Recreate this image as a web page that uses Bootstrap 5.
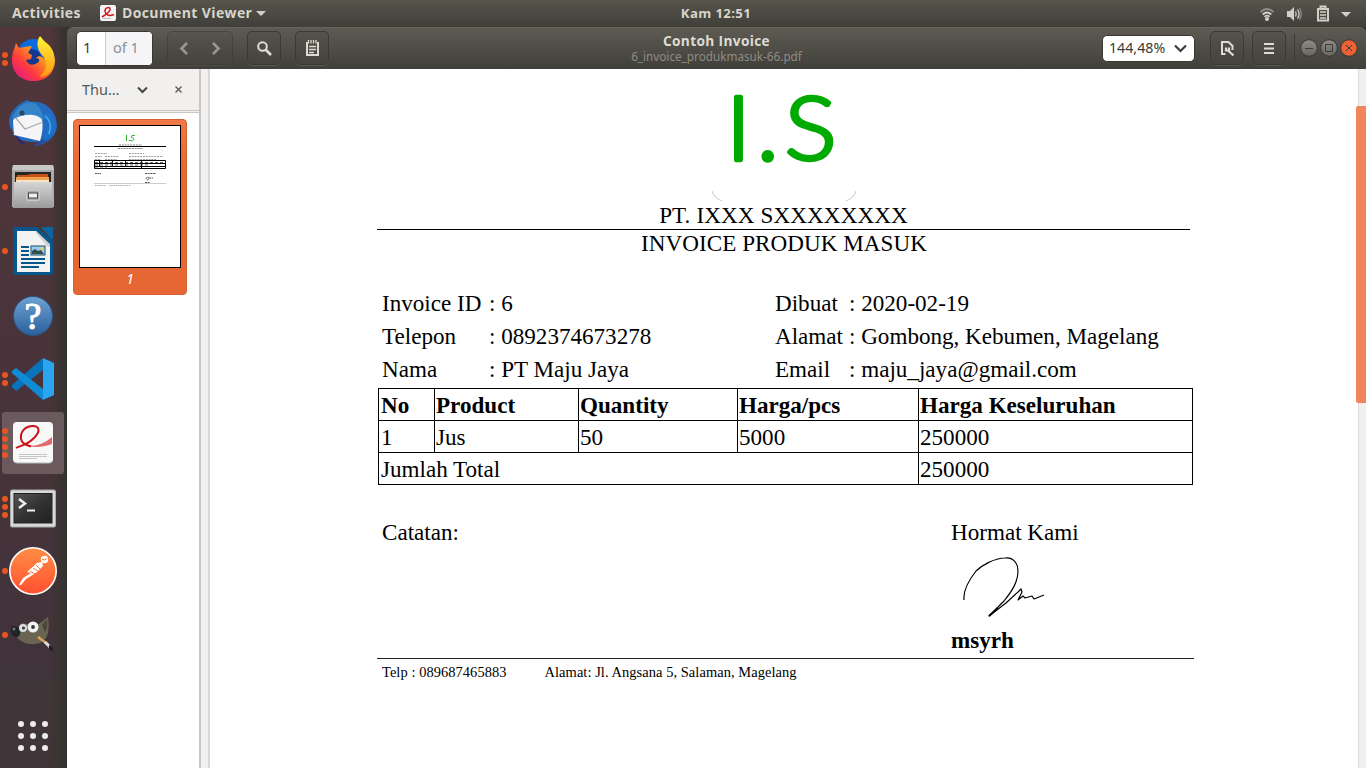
<!DOCTYPE html>
<html lang="id">
<head>
<meta charset="utf-8">
<title>Contoh Invoice</title>
<link href="https://cdn.jsdelivr.net/npm/bootstrap@5.3.0/dist/css/bootstrap.min.css" rel="stylesheet">
<style>
body{height:768px;overflow:hidden;background:#34332e;font-family:"Noto Sans","Open Sans",sans-serif;font-size:14px;line-height:1.2;color:#dfdbd2}
svg{display:block;flex:none}
.topbar{height:27px;background:linear-gradient(#57554c,#3f3e39);font-family:"Open Sans","Noto Sans",sans-serif;font-weight:700;font-size:14px;letter-spacing:.38px;color:#d8d4cb}
.grid3{display:grid;grid-template-columns:minmax(0,1fr) auto minmax(0,1fr)}
.dock{width:67px;height:741px;background:linear-gradient(90deg,transparent 50px,#34332e 66px),linear-gradient(#51363b,#46333a 60%,#41333a 88%,#3f3638 88.2%,#403438)}
.dockitem{height:64px;width:67px}
.dockitem.active-app::before{content:"";position:absolute;left:2px;top:1px;width:62px;height:62px;border-radius:3px;background:#6a5a5d}
.pips{position:absolute;left:2px;top:0;height:64px;gap:2.3px}
.pips i{width:6px;height:6px;border-radius:50%;background:#e95420}
.dockitem>svg{position:relative;margin-left:9px}
.headbar{height:42px;background:linear-gradient(#5d5b52,#403f3a);border-top:1px solid #67645a;border-radius:6px 6px 0 0}
.pagebox{width:77px;height:35px;margin:-1px 0 0 9px;border-radius:5px;border:1px solid #383733;background:#fff;overflow:hidden;font-size:14.5px;color:#3c3b37}
.pagebox .cur{width:29px;padding-left:6px;border-right:1px solid #ccc}
.pagebox .tot{color:#8b8e8f;background:#f5f5f8;padding-left:7px}
.hbtn{height:34px;margin-top:-1px;border:1px solid #3a3935;border-radius:5px;background:linear-gradient(#55534a,#44433e);box-shadow:0 1px 0 #57554c}
.zoombox{width:93px;height:27px;margin-top:-1px;border-radius:5px;background:#fff;color:#3c3b37;font-size:14.2px;border:1px solid #383733;padding-left:6px}
.wintitle{font:700 13.7px/15px "Open Sans","Noto Sans",sans-serif;letter-spacing:.35px}
.winsub{font-size:11.72px;line-height:16px;color:#8f8c84}
.side{width:132px;background:#fff}
.sidehead{height:42px;background:#f1f0ee;border-bottom:1px solid #c9c8c5;color:#55585a;font-size:14.5px}
.thumb{margin:6px 0 0 6px;width:114px;height:176px;border-radius:4px;background:linear-gradient(#f07746,#e66733 30%);border:1px solid #d5612f;color:#fff}
.gutter{width:11px;background:#f1f0ee;border-left:2px solid #c8c7c4;border-right:2px solid #d8d7d5}
.paper{background:#fff;color:#000;font-family:"Liberation Serif",serif;font-size:23.1px;line-height:33px}
.doc{width:817px;margin-left:167px}
.logo{height:132px}
.co{width:813px;height:29px;line-height:28px;border-bottom:1px solid #000;letter-spacing:.12px}
.ti{width:814px;line-height:26px;height:57px;letter-spacing:.05px}
.meta{display:grid;grid-template-columns:107px 286px 74px 1fr;grid-auto-rows:33px;padding-left:5px;height:101px;white-space:pre}
.inv{width:815px;table-layout:fixed;border-collapse:collapse;margin-left:1px;color:#000}
.inv td,.inv th{border:1px solid #000;height:32px;padding:2px 0 0 1px;line-height:29px;text-align:left}
.inv td:first-child,.inv th:first-child{padding-left:2px}
.notes{margin-top:31px;height:142px;padding-left:5px;display:grid;grid-template-columns:569px 1fr}
.foot{border-top:1px solid #222;padding:5px 0 0 5px;font-size:14.45px;line-height:16px;gap:38px;letter-spacing:.065px}
.sb{width:10px;padding-left:2px}
.sb>div{height:100%;background:#f1f0ee;border-left:1px solid #dddcda;position:relative}
.sb b{position:absolute;left:-3px;width:10px;top:37px;height:297px;background:#f0845a;border-radius:2px 0 0 2px}
</style>
</head>
<body>
<svg width="0" height="0" class="position-absolute"><defs>
<linearGradient id="ff" x1="1" y1="0" x2="0.1" y2="1"><stop offset="0" stop-color="#fff14a"/><stop offset=".4" stop-color="#ff9b1a"/><stop offset=".7" stop-color="#ff3a3e"/><stop offset="1" stop-color="#e01590"/></linearGradient>
<linearGradient id="ff2" x1="0" y1="0" x2="0" y2="1"><stop offset="0" stop-color="#fff33a"/><stop offset="1" stop-color="#ff9a10"/></linearGradient>
<linearGradient id="bl" x1="0" y1="0" x2="0" y2="1"><stop offset="0" stop-color="#6da2d4"/><stop offset="1" stop-color="#2b5f9c"/></linearGradient>
<linearGradient id="gr" x1="0" y1="0" x2="0" y2="1"><stop offset="0" stop-color="#d5d5d5"/><stop offset="1" stop-color="#9b9b9b"/></linearGradient>
<linearGradient id="pm" x1="0" y1="0" x2="0" y2="1"><stop offset="0" stop-color="#ff8d45"/><stop offset="1" stop-color="#ff5030"/></linearGradient>
<linearGradient id="dk" x1="0" y1="0" x2="1" y2="1"><stop offset="0" stop-color="#555"/><stop offset=".5" stop-color="#333"/><stop offset="1" stop-color="#202020"/></linearGradient>
<linearGradient id="wm" x1="0" y1="0" x2="0" y2="1"><stop offset="0" stop-color="#8d8c86"/><stop offset="1" stop-color="#65645e"/></linearGradient>
</defs></svg>

<nav class="topbar grid3 align-items-center">
  <div class="d-flex align-items-center">
    <span style="margin-left:12px;width:88px">Activities</span>
    <svg width="16" height="16" viewBox="0 0 16 16"><rect width="16" height="16" rx="2" fill="#f4f4f4"/><path d="M2 12C7 9 11 6 10 3.5C9 1.500 4.500 3 5 6.500C5.500 10 9 11.500 14 9.500" fill="none" stroke="#d4141c" stroke-width="1.500"/><path d="M3 13.500h8" stroke="#bbb"/></svg>
    <span style="margin-left:6px;width:134px">Document Viewer</span>
    <svg width="10" height="5" viewBox="0 0 10 5"><path d="M0 0h10L5 5z" fill="#d3cfc6"/></svg>
  </div>
  <span style="font-size:13.2px;margin-left:66px">Kam 12:51</span>
  <div class="d-flex align-items-center justify-content-end">
    <svg width="106" height="20" viewBox="0 0 106 20" fill="none" stroke="#d3cfc6"><g stroke-width="1.800"><path d="M0.500 8Q7 2 13.500 8" stroke="#8f8c84"/><path d="M2.700 10.500Q7 6.500 11.300 10.500"/><path d="M4.500 12.800Q7 10.500 9.500 12.800"/></g><circle cx="7" cy="15" r="2" fill="#d3cfc6" stroke="none"/><path d="M27 7h3l4-4v14l-4-4h-3z" fill="#d3cfc6" stroke="none"/><path d="M35.500 7.500q1.500 2.500 0 5M37.500 5.500q3 4.500 0 9" stroke-width="1.300"/><path d="M39.500 4q3.500 6 0 12" stroke="#8f8c84" stroke-width="1.300"/><path d="M60.500 4V2.500h5V4M58 5h10v11.500H58z" stroke-width="2"/><path d="M60 8h6M60 11h6M60 14h6" stroke-width="1.500"/><path d="M81 8h10l-5 5z" fill="#d3cfc6" stroke="none"/></svg>
  </div>
</nav>

<div class="d-flex">
<aside class="dock d-flex flex-column">
  <div class="dockitem position-relative d-flex align-items-center"><div class="pips d-flex flex-column justify-content-center"><i></i><i></i></div>
    <svg width="48" height="48" viewBox="0 0 48 48"><circle cx="25" cy="22" r="18" fill="#0b6ae0"/><circle cx="22" cy="25" r="11" fill="#15378f"/><path d="M7 8L10 13L15 12L23 11L19 18L23 20L22 24L17 25C19 30 24 31 28 28C32 26 30 23 27 23C30 19 37 22 36 29C35 36 26 38 20 34C29 39 38 33 35 22C34 16 29 14 29 9L30 2L36 7C43 12 46 19 46 27C45 39 36 46 25 46C12 46 3 38 3 25C3 18 5 15 7 8Z" fill="url(#ff)"/><path d="M31 1L36 7C43 11 46 19 45 27C44 37 37 42 30 42C38 35 39 29 35 22C29 17 26 8 31 1Z" fill="url(#ff2)"/></svg></div>
  <div class="dockitem position-relative d-flex align-items-center">
    <svg width="48" height="48" viewBox="0 0 48 48"><path d="M0 22C1 10 12 4 18 1L22 3C35 1 48 11 48 27C47 39 36 46 25 47L34 42C20 45 9 41 3 35L5 34C2 31 0 27 0 22Z" fill="#236ac0"/><path d="M3 33L12 45L17 46L12 41Z" fill="#302573"/><path d="M24 47L34 40L44 34Q38 46 24 47Z" fill="#274a9e"/><path d="M6 17L28 12C33 17 36 25 31 42L5 36L4 22Z" fill="#f5f5f8"/><path d="M6 18L16 30L34 23" fill="none" stroke="#aaa" stroke-width="1.200"/><path d="M3 18C9 8 14 3 23 3C30 6 33 11 35 22C28 14 17 14 4 20Z" fill="#3584c8"/><circle cx="13" cy="14" r="2.500" fill="#284865"/><path d="M35 20C42 21 42 31 34 42C46 39 49 25 41 15L34 14Z" fill="#1a73cc"/><path d="M36 17q8 6 4 18" fill="none" stroke="#55aee0" stroke-width="1.500"/></svg></div>
  <div class="dockitem position-relative d-flex align-items-center"><div class="pips d-flex flex-column justify-content-center"><i></i></div>
    <svg width="48" height="48" viewBox="0 0 48 48"><path d="M4 2h40l1 5v37H3V7z" fill="#aaa"/><path d="M4 2h40l1 5H3z" fill="#c7c7c7"/><rect x="6" y="9" width="36" height="12" fill="#252525"/><path d="M8 12h11l2-1h18v9H8z" fill="#c65215"/><path d="M7 14h33v3H7z" fill="#f1a050"/><path d="M7 17h33v3H7z" fill="#f4e2c5"/><path d="M5 19h38l1 26H4z" fill="url(#gr)"/><rect x="17.500" y="27.500" width="13" height="10" rx="1.500" fill="#aaa" stroke="#c9c9c9"/><rect x="19.500" y="30" width="9" height="5" fill="#eee" stroke="#444"/></svg></div>
  <div class="dockitem position-relative d-flex align-items-center"><div class="pips d-flex flex-column justify-content-center"><i></i></div>
    <svg width="48" height="48" viewBox="0 0 48 48"><path d="M5 0h23l16 14v31q0 3-3 3H7q-3 0-3-3V1z" fill="#07578c"/><path d="M8 4h19l14 14v27H8z" fill="#f3f3f3"/><path d="M27 4v2l12 14h2v-3z" fill="#cfcfcf"/><path d="M32 0h12v12h-2z" fill="#0b659e"/><path d="M12 20h8M12 24h8M12 28h8M12 32h24M12 36h24M12 40h18" stroke="#07578c" stroke-width="2"/><rect x="22" y="19" width="14" height="9" fill="#93cdf1" stroke="#254d6d"/><path d="M23 27v-3l3-2 3 2 3-1 3 4z" fill="#344d4d"/><circle cx="33" cy="21.500" r="1.800" fill="#edcb5a"/></svg></div>
  <div class="dockitem position-relative d-flex align-items-center">
    <svg width="48" height="48" viewBox="0 0 48 48"><circle cx="24" cy="25" r="19.500" fill="url(#bl)" stroke="#2b5584"/><text x="24" y="38" text-anchor="middle" font-family="Liberation Serif,serif" font-size="38" fill="#fff" stroke="#fff" stroke-width="1">?</text></svg></div>
  <div class="dockitem position-relative d-flex align-items-center"><div class="pips d-flex flex-column justify-content-center"><i></i><i></i></div>
    <svg width="48" height="48" viewBox="0 0 48 48"><path d="M34 3L45 8V40L34 45Z" fill="#2aa5ef"/><path d="M34 3V15L7 36L3 32V30Z" fill="#0874bd"/><path d="M7 13L34 34V45L3 18V16Z" fill="#108bd5"/></svg></div>
  <div class="dockitem active-app position-relative d-flex align-items-center"><div class="pips d-flex flex-column justify-content-center"><i></i><i></i><i></i><i></i></div>
    <svg width="48" height="48" viewBox="0 0 48 48"><rect x="4" y="3" width="40" height="41" rx="4" fill="#f8f8f8"/><path d="M5 42q0 2 3 2h32q3 0 3-2" stroke="#bbb" fill="none"/><path d="M19 27C29 27 36 24 43 18V25C34 28 27 29 19 27Z" fill="#e2686b"/><path d="M7 29C12 26 17 27 25 19C33 11 29 7 24 7C16 7 11 13 12 20C13 25 17 26 22 27.500" fill="none" stroke="#cc1017" stroke-width="2"/><path d="M10 35.500h28M10 37.500h28M10 39.500h18" stroke="#c6c6c6"/></svg></div>
  <div class="dockitem position-relative d-flex align-items-center"><div class="pips d-flex flex-column justify-content-center"><i></i><i></i><i></i></div>
    <svg width="48" height="48" viewBox="0 0 48 48"><rect x="1.500" y="7" width="45" height="37" rx="1.500" fill="#d8d8d8" stroke="#aaa"/><rect x="5" y="10.500" width="38" height="29.500" fill="url(#dk)" stroke="#222"/><path d="M10 16L16 20.500L10 25" fill="none" stroke="#eee" stroke-width="2.400"/><path d="M18 27.500h8" stroke="#eee" stroke-width="2"/></svg></div>
  <div class="dockitem position-relative d-flex align-items-center"><div class="pips d-flex flex-column justify-content-center"><i></i></div>
    <svg width="48" height="48" viewBox="0 0 48 48"><circle cx="24" cy="24" r="23.200" fill="url(#pm)" stroke="#fff" stroke-width="1.600"/><path d="M18 25L28 16L33 15L34 19L28 25L22 29L17 32L12 38H10L14 31L22 26Z" fill="#fff"/><circle cx="35.500" cy="12.500" r="3.700" fill="#fff"/><path d="M21 24l5 3M24 21l5 3M27 18l4 4M33 12l3 1 2-2" fill="none" stroke="#ff7a40" stroke-width="1"/></svg></div>
  <div class="dockitem position-relative d-flex align-items-center"><div class="pips d-flex flex-column justify-content-center"><i></i></div>
    <svg width="48" height="48" viewBox="0 0 48 48"><path d="M8 20L13 12L22 14L30 13L39 6C40 12 40 20 38 25C34 34 22 35 14 31Q9 29 7 24Z" fill="#6a6453"/><path d="M33 14L38 8Q39 17 36 21Z" fill="#4a463a"/><ellipse cx="6.500" cy="20.500" rx="4.500" ry="5.800" fill="#1f2427" transform="rotate(-25 6.500 20.500)"/><circle cx="5" cy="18" r="1.500" fill="#777"/><circle cx="14" cy="17" r="4" fill="#ddd"/><circle cx="24" cy="16" r="5.500" fill="#f3f3f3"/><circle cx="14.500" cy="17" r="1.500" fill="#333"/><circle cx="24" cy="16" r="1.900" fill="#333"/><path d="M29 26L37 32" stroke="#e2a251" stroke-width="2.400"/><path d="M36 31L41 36" stroke="#ddd" stroke-width="3"/><path d="M40 34Q44 35 44.500 41Q39 39 40 34" fill="#1e1e20"/></svg></div>
  <div class="mt-auto d-flex" style="padding:0 0 16px 17px">
    <svg width="32" height="32" viewBox="0 0 32 32" fill="#eeecea"><g id="dr"><circle cx="4" cy="4" r="3"/><circle cx="16" cy="4" r="3"/><circle cx="28" cy="4" r="3"/></g><use href="#dr" y="12"/><use href="#dr" y="24"/></svg></div>
</aside>

<main class="flex-grow-1">
  <header class="headbar grid3 align-items-center">
    <div class="d-flex align-items-center">
      <div class="pagebox d-flex align-items-stretch"><span class="cur d-flex align-items-center">1</span><span class="tot flex-grow-1 d-flex align-items-center">of 1</span></div>
      <div class="hbtn d-flex align-items-center" style="width:66px;margin-left:14px;opacity:.55"><svg width="64" height="32" viewBox="0 0 64 32" fill="none" stroke="#d8d4cb" stroke-width="2.600"><path d="M19 11L13.500 16.500L19 22M45 11L50.500 16.500L45 22"/></svg></div>
      <div class="hbtn" style="width:34px;margin-left:14px"><svg width="32" height="32" viewBox="0 0 32 32" fill="none" stroke="#dfdbd2"><circle cx="14.500" cy="14.500" r="4.300" stroke-width="2"/><path d="M17.500 17.500l5.500 5.500" stroke-width="2.600"/></svg></div>
      <div class="hbtn" style="width:34px;margin-left:14px"><svg width="32" height="32" viewBox="0 0 32 32" fill="none" stroke="#dfdbd2"><path d="M11 10v13h11V10" stroke-width="2"/><path d="M12.500 8v3.500M15 8v3.500M17.500 8v3.500M20 8v3.500M13 14.500h7M13 17.500h7M13 20.500h5" stroke-width="1.300"/></svg></div>
    </div>
    <div class="text-center"><div class="wintitle">Contoh Invoice</div><div class="winsub">6_invoice_produkmasuk-66.pdf</div></div>
    <div class="d-flex align-items-center justify-content-end">
      <div class="zoombox d-flex align-items-center">144,48%<svg class="ms-auto" style="margin-right:7px" width="13" height="9" viewBox="0 0 13 9"><path d="M1 1.500l5.500 5.500 5.500-5.500" fill="none" stroke="#3c3b37" stroke-width="2.200"/></svg></div>
      <div class="hbtn" style="width:34px;margin-left:15px"><svg width="32" height="32" viewBox="0 0 32 32" fill="none"><path d="M14.500 22H11V10h6.500l4 4v4" stroke="#dfdbd2" stroke-width="2"/><path d="M15 15.500v3h3v-3M17 18.500l5.500 5" stroke="#dfdbd2" stroke-width="2.200"/></svg></div>
      <div class="hbtn" style="width:34px;margin-left:8px"><svg width="32" height="32" viewBox="0 0 32 32"><path d="M11 12h10M11 16.500h10M11 21h10" stroke="#dfdbd2" stroke-width="2"/></svg></div>
      <svg style="margin:-2px 0 0 8px" width="72" height="34" viewBox="0 0 72 34"><path d="M.5 3v28" stroke="#3b3a36"/><g stroke="#383733"><circle cx="15" cy="17" r="8.300" fill="url(#wm)"/><circle cx="35" cy="17" r="8.300" fill="url(#wm)"/><circle cx="55" cy="17" r="8.300" fill="#ec6236"/></g><path d="M11 17.500h8M31.500 13.500h7v7h-7zM52 14l6 6M58 14l-6 6" fill="none" stroke="#3c3b37"/></svg>
    </div>
  </header>
  <div class="d-flex" style="height:699px">
    <section class="side">
      <div class="sidehead d-flex align-items-center"><span style="margin-left:15px;width:55px">Thu…</span><svg width="11" height="8" viewBox="0 0 11 8"><path d="M1 1.500l4.500 4.500 4.500-4.500" fill="none" stroke="#454545" stroke-width="2"/></svg><svg style="margin-left:27px" width="7" height="7" viewBox="0 0 7 7"><path d="M.5.5l6 6M6.500.5l-6 6" stroke="#555" stroke-width="1.200"/></svg></div>
      <div style="height:2px;border-bottom:1px solid #c9c8c5;background:#f1f0ee"></div>
      <div class="thumb d-flex flex-column align-items-center">
        <svg style="margin-top:5px" width="102" height="143" viewBox="0 0 102 143"><rect x=".5" y=".5" width="101" height="142" fill="#fff" stroke="#000"/>
        <path d="M47.500 10v6M50 15.500h1.500M56 10.500q-4-1-4 1.500q3 1 3 2.500q-1 2-4 1" fill="none" stroke="#2fb42f"/>
        <g stroke="#555" stroke-dasharray="2 .8" opacity=".7"><path d="M40 20h23M39 23.500h25"/><path d="M16 28.500h12M50 28.500h15M16 31.500h7M26 31.500h14M50 31.500h34M16 34.500h6M26 34.500h12M50 34.500h28" stroke-width=".8"/></g>
        <path d="M15 21.500h72" stroke="#000"/><path d="M15.500 35.500h71v8h-71zM15 38.500h72M15 41.500h72M20.500 36v6M33.500 36v6M46.500 36v6M62.500 36v8" fill="none" stroke="#000"/>
        <path d="M16 37.500h68M16 40h55M16 43h12" stroke="#444" stroke-width=".8" stroke-dasharray="3 2"/>
        <path d="M16 48.500h6M66 48.500h11M67 54q2-4 3 0l-2 1M70 53h4M66 57.500h5" fill="none" stroke="#555" stroke-dasharray="2 .6"/><path d="M15 58.500h72" stroke="#ccc"/><path d="M16 60.500h11M30 60.500h22" stroke="#999" stroke-dasharray="1.500 .7" stroke-width=".8"/></svg>
        <span style="margin-top:3px;font-style:italic;font-size:14px">1</span>
      </div>
    </section>
    <div class="gutter"></div>
    <section class="paper flex-grow-1">
      <div class="doc">
        <svg class="logo" width="817" height="132" viewBox="0 0 817 132"><g font-family="Lato,sans-serif" font-weight="300" font-size="88" fill="#0a0" stroke="#0a0" stroke-width="4.400" stroke-linejoin="round"><text y="91" x="350 380.500">I.</text><text transform="translate(407.500 91.200) scale(1.11 1)" stroke-width="3.400">S</text></g><path d="M335 122q2 7 10 10M479 122q-2 7-10 10" fill="none" stroke="#c8c8c8"/></svg>
        <div class="co text-center">PT. IXXX SXXXXXXXX</div>
        <div class="ti text-center">INVOICE PRODUK MASUK</div>
        <div class="meta"><span>Invoice ID</span><span>: 6</span><span>Dibuat</span><span>: 2020-02-19</span><span>Telepon</span><span>: 0892374673278</span><span>Alamat</span><span>: Gombong, Kebumen, Magelang</span><span>Nama</span><span>: PT Maju Jaya</span><span>Email</span><span>: maju_jaya@gmail.com</span></div>
        <table class="inv"><colgroup><col style="width:56px"><col style="width:144px"><col style="width:159px"><col style="width:181px"><col></colgroup>
          <tr><th>No</th><th>Product</th><th>Quantity</th><th>Harga/pcs</th><th>Harga Keseluruhan</th></tr>
          <tr><td>1</td><td>Jus</td><td>50</td><td>5000</td><td>250000</td></tr>
          <tr><td colspan="4">Jumlah Total</td><td>250000</td></tr></table>
        <div class="notes"><div>Catatan:</div><div><div>Hormat Kami</div>
          <svg width="110" height="75" viewBox="0 0 110 75" fill="none" stroke="#000" stroke-width="1.200" stroke-linejoin="round"><path d="M13 51C12 42 18 31 25 22C30 17 43 9 54 9C62 8 67 14 67 22C67 33 61 42 53 52L38 67L55 54L67 43L70 40L71 43L67 51L72 47L74 49L81 47L83 50L93 46"/><path d="M38 67L47 59" stroke-width="1.800"/></svg>
          <b>msyrh</b></div></div>
        <div class="foot d-flex"><span>Telp : 089687465883</span><span>Alamat: Jl. Angsana 5, Salaman, Magelang</span></div>
      </div>
    </section>
    <div class="sb bg-white"><div><b></b></div></div>
  </div>
</main>
</div>
<script src="https://cdn.jsdelivr.net/npm/bootstrap@5.3.0/dist/js/bootstrap.bundle.min.js"></script>
</body>
</html>
